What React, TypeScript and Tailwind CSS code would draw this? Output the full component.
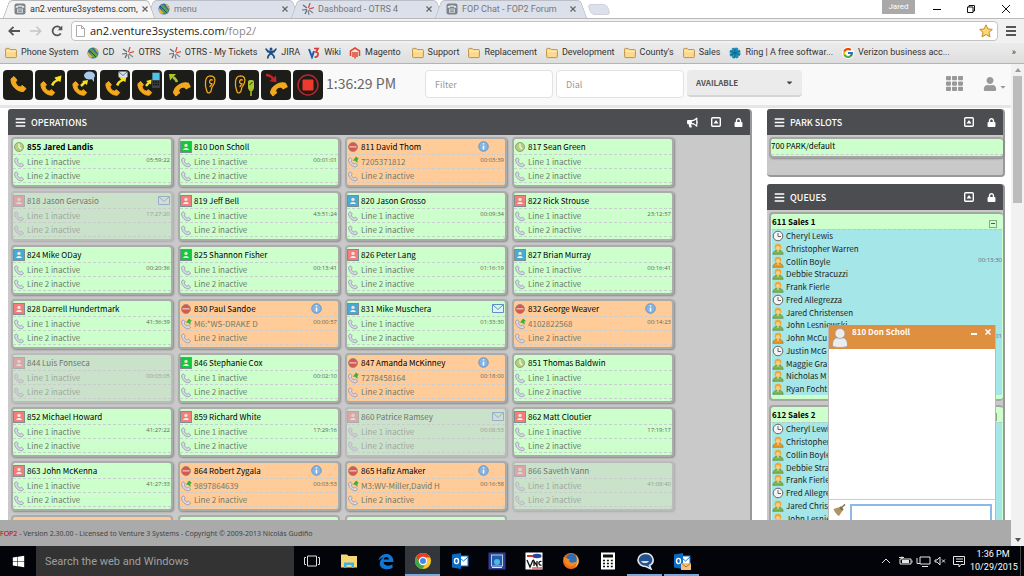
/**
 * @file App.tsx
 * @description FOP2 operator panel inside a Chrome window on a Windows 10 desktop
 *
 * Sections:
 * - Browser chrome (tabs, address bar, bookmarks)
 * - Operator panel (action toolbar, extensions, park slots, queues, chat)
 * - Windows taskbar
 */

import { memo, ReactNode } from "react";
import { FaBars, FaBullhorn, FaCaretDown, FaLock, FaTh, FaUser, FaWindows } from "react-icons/fa";
import { FcGoogle } from "react-icons/fc";

const HANDSET = "M1 3 4 .5 7 4 5.5 6.2C6 8.5 8 10.7 10.2 11L12.3 9.5 16 12.5 13.5 15.5C7 16 .5 9.5 1 3Z";

type Status = "ready" | "busy" | "green" | "red" | "blue";

interface Extension {
  name: string;
  status: Status;
  time?: string;
  call?: string;
  mail?: boolean;
  away?: boolean;
  own?: boolean;
}

const EXTENSIONS: Extension[] = [
  { name: "855 Jared Landis", status: "ready", time: "05:59:22", own: true },
  { name: "810 Don Scholl", status: "green", time: "00:01:01" },
  { name: "811 David Thom", status: "busy", time: "00:03:39", call: "7205371812" },
  { name: "817 Sean Green", status: "ready" },
  { name: "818 Jason Gervasio", status: "red", time: "17:27:20", mail: true, away: true },
  { name: "819 Jeff Bell", status: "red", time: "43:51:24" },
  { name: "820 Jason Grosso", status: "blue", time: "00:09:34" },
  { name: "822 Rick Strouse", status: "red", time: "23:12:57" },
  { name: "824 Mike ODay", status: "blue", time: "00:20:36" },
  { name: "825 Shannon Fisher", status: "green", time: "00:13:41" },
  { name: "826 Peter Lang", status: "red", time: "01:16:19" },
  { name: "827 Brian Murray", status: "blue", time: "00:16:41" },
  { name: "828 Darrell Hundertmark", status: "red", time: "41:36:39" },
  { name: "830 Paul Sandoe", status: "busy", time: "00:00:57", call: "M6:*WS-DRAKE D" },
  { name: "831 Mike Muschera", status: "blue", time: "01:33:30", mail: true },
  { name: "832 George Weaver", status: "busy", time: "00:14:23", call: "4102822568" },
  { name: "844 Luis Fonseca", status: "red", time: "00:03:05", away: true },
  { name: "846 Stephanie Cox", status: "green", time: "00:02:10" },
  { name: "847 Amanda McKinney", status: "busy", time: "00:18:00", call: "7278458164" },
  { name: "851 Thomas Baldwin", status: "ready" },
  { name: "852 Michael Howard", status: "red", time: "41:27:22" },
  { name: "859 Richard White", status: "red", time: "17:29:16" },
  { name: "860 Patrice Ramsey", status: "red", time: "00:08:53", mail: true, away: true },
  { name: "862 Matt Cloutier", status: "red", time: "17:19:17" },
  { name: "863 John McKenna", status: "red", time: "41:27:33" },
  { name: "864 Robert Zygala", status: "busy", time: "00:03:53", call: "9897864639" },
  { name: "865 Hafiz Amaker", status: "busy", time: "00:16:58", call: "M3:WV-Miller,David H" },
  { name: "866 Saveth Vann", status: "red", time: "41:08:40", away: true },
];

type AgentState = "clock" | "free" | "busy";

interface Agent {
  name: string;
  state: AgentState;
  time?: string;
}

const SALES_1: Agent[] = [
  { name: "Cheryl Lewis", state: "clock" },
  { name: "Christopher Warren", state: "free" },
  { name: "Collin Boyle", state: "busy", time: "00:13:30" },
  { name: "Debbie Stracuzzi", state: "free" },
  { name: "Frank Fierle", state: "free" },
  { name: "Fred Allegrezza", state: "clock" },
  { name: "Jared Christensen", state: "free" },
  { name: "John Lesniewski", state: "free" },
  { name: "John McCu", state: "busy", time: "01" },
  { name: "Justin McG", state: "clock" },
  { name: "Maggie Gra", state: "free" },
  { name: "Nicholas M", state: "free" },
  { name: "Ryan Focht", state: "free" },
];

const SALES_2: Agent[] = [
  { name: "Cheryl Lewis", state: "clock" },
  { name: "Christopher", state: "busy" },
  { name: "Collin Boyle", state: "free" },
  { name: "Debbie Stra", state: "free" },
  { name: "Frank Fierle", state: "free" },
  { name: "Fred Allegre", state: "clock" },
  { name: "Jared Chris", state: "free" },
  { name: "John Lesnie", state: "free" },
];

/* ---------- small icons ---------- */

const Globe = () => (
  <svg width="12" height="12" viewBox="0 0 12 12" className="shrink-0">
    <circle cx="6" cy="6" r="5.5" fill="#2f6ea5" />
    <path d="M2 2.5C4 .5 6 2 7 4L11 8C10 11 7 11.5 6 10L4 7Z" fill="#5fa04a" />
    <path d="M1 5 6 10C5 11.5 2 11 1 8ZM7 1C10 1 11.5 4 11 6.5Z" fill="#e0b43a" />
    <path d="M2 3 9 10" stroke="#1e4a74" />
  </svg>
);

const Otrs = () => (
  <svg width="12" height="12" viewBox="0 0 12 12" className="shrink-0" strokeWidth="1.2">
    <path d="M5 5 1 2M5 6.5 0 7M5 7 3 11" stroke="#5d6670" />
    <path d="M6.5 5 8 0M7 6 12 4.5" stroke="#d8493d" />
    <path d="M7 7 11 10M6 7.5 7 12" stroke="#7c868f" />
  </svg>
);

const FopPhone = () => (
  <svg width="12" height="12" viewBox="0 0 12 12" className="shrink-0">
    <rect x=".5" y=".5" width="11" height="11" rx="2" fill="#7b8289" />
    <path d="M1.5 4.5C1.5 1.5 10.5 1.5 10.5 4.5L8.5 5 8 3.8H4L3.5 5Z" fill="#e8eaec" />
    <rect x="3" y="5.5" width="6" height="4.5" rx="1" fill="#d0d4d8" />
    <path d="M4 7H8M4 8.7H8" stroke="#70767c" strokeWidth=".8" />
  </svg>
);

const FolderIcon = () => (
  <svg width="12" height="12" viewBox="0 0 12 12" className="shrink-0">
    <path d="M.6 2.2Q.6 1.4 1.4 1.4H4.2L5.3 2.6H10.6Q11.4 2.6 11.4 3.4V9.8Q11.4 10.6 10.6 10.6H1.4Q.6 10.6 .6 9.8Z" fill="#fbd98e" stroke="#b98a3a" strokeWidth=".9" />
    <path d="M1.2 4.2H10.8" stroke="#fff1c9" />
  </svg>
);

const Jira = () => (
  <svg width="12" height="12" viewBox="0 0 12 12" className="shrink-0" stroke="#1c4f86" fill="none" strokeWidth="1.8">
    <circle cx="6" cy="2" r="1.5" fill="#1c4f86" stroke="none" />
    <path d="M1 1.5C1 5 11 7 9 11.5M11 1.5C11 5 1 7 3 11.5M2 4.5 10 4.5" />
  </svg>
);

const WikiMark = () => (
  <svg width="12" height="12" viewBox="0 0 12 12" className="shrink-0" fill="none" strokeWidth="2">
    <path d="M1 2 4 10 6 4" stroke="#1f5fae" />
    <path d="M6 1.5H10L8 5C11 5 11 10.5 6.5 10" stroke="#d63b2f" strokeWidth="1.7" />
  </svg>
);

const MagentoMark = () => (
  <svg width="12" height="12" viewBox="0 0 12 12" className="shrink-0" fill="none" stroke="#e0452c" strokeWidth="1.5">
    <path d="M1.5 9V3.8L6 1 10.5 3.8V9M4 10V5M8 10V5M6 5V11.5" />
  </svg>
);

const RingMark = () => (
  <svg width="12" height="12" viewBox="0 0 12 12" className="shrink-0">
    <circle cx="6" cy="6" r="4.6" fill="#1f8fb8" stroke="#1f8fb8" strokeWidth="2" strokeDasharray="2.5 1.1" />
    <path d="M6 1V11M1.5 4 10.5 8M10.5 4 1.5 8" stroke="#11617f" strokeWidth=".8" />
  </svg>
);

const CloseMark = () => (
  <svg width="6" height="6" viewBox="0 0 6 6" className="shrink-0" stroke="#666">
    <path d="M.5 .5 5.5 5.5M5.5 .5 .5 5.5" strokeWidth="1.2" />
  </svg>
);

/* ---------- browser ---------- */

const Tab = ({ icon, title, active }: { icon: ReactNode; title: string; active?: boolean }) => {
  const edge = active ? "bg-[#f4f4f4] border-[#b5b5b5]" : "bg-[#dce0ea] border-[#bbbec6]";
  return (
    <div className={`relative -ml-[10px] flex h-full w-[154px] items-center gap-1 pl-3 pr-[13px] ${active ? "z-10" : ""}`}>
      <span className={`absolute inset-y-0 left-1 w-1/2 -skew-x-[20deg] rounded-tl border-l border-t ${edge}`} />
      <span className={`absolute inset-y-0 right-1 w-1/2 skew-x-[20deg] rounded-tr border-r border-t ${edge}`} />
      <span className="relative">{icon}</span>
      <span className={`relative flex-1 whitespace-nowrap text-[9px] leading-3 ${active ? "text-[#333]" : "text-[#777]"}`}>
        {title}
      </span>
      <button aria-label="Close tab" className="relative -mr-px"><CloseMark /></button>
    </div>
  );
};

const Bookmark = ({ icon, label }: { icon: ReactNode; label: string }) => (
  <a href="#" className="flex items-center gap-1 whitespace-nowrap">
    {icon}
    {label}
  </a>
);

const BrowserChrome = () => (
  <header className="shrink-0 font-['Roboto','Open_Sans',sans-serif]">
    <div className="flex h-[19px] items-stretch border-b border-[#b9b9b9] bg-white">
      <div className="flex pl-3">
        <Tab active icon={<FopPhone />} title="an2.venture3systems.com," />
        <Tab icon={<Globe />} title="menu" />
        <Tab icon={<Otrs />} title="Dashboard - OTRS 4" />
        <Tab icon={<FopPhone />} title="FOP Chat - FOP2 Forum" />
        <button aria-label="New tab" className="mt-1 ml-px h-[11px] w-5 skew-x-[20deg] rounded-sm border border-[#cfd2da] bg-[#dce0ea]" />
      </div>
      <div className="ml-auto flex items-start">
        <span className="h-[14px] w-[33px] bg-[#a9a9a9] text-center text-[8px] leading-[14px] text-white">Jared</span>
        <button aria-label="Minimize" className="ml-2 flex h-[18px] w-[28px] items-center justify-center">
          <span className="h-px w-2 bg-black" />
        </button>
        <button aria-label="Restore" className="ml-1 flex h-[18px] w-[32px] items-center justify-center">
          <svg width="8" height="8" viewBox="0 0 8 8" fill="none" stroke="#111">
            <path d="M.5 2H6V7.5H.5ZM2 2V.5H7.5V6H6" />
          </svg>
        </button>
        <button aria-label="Close" className="flex h-[18px] w-[37px] items-center justify-center">
          <svg width="8" height="8" viewBox="0 0 8 8" stroke="#111"><path d="M0 0 8 8M8 0 0 8" /></svg>
        </button>
      </div>
    </div>

    <div className="flex h-[24px] items-center bg-[#f1f1f1] pl-2 pr-1">
      <button aria-label="Back" className="w-[22px]">
        <svg width="12" height="10" viewBox="0 0 12 10" fill="none" stroke="#555" strokeWidth="1.8"><path d="M12 5H1M5.5 .8 1.3 5 5.5 9.2" /></svg>
      </button>
      <button aria-label="Forward" className="w-[21px]">
        <svg width="12" height="10" viewBox="0 0 12 10" fill="none" stroke="#c4c4c4" strokeWidth="1.5"><path d="M0 5H11M6.5 .8 10.7 5 6.5 9.2" /></svg>
      </button>
      <button aria-label="Reload" className="w-[20px]">
        <svg width="12" height="12" viewBox="0 0 12 12" fill="none" stroke="#555" strokeWidth="1.8">
          <path d="M9.8 8.5A4.5 4.5 0 1 1 9.5 3" />
          <path d="M11.3 .6V5.2H6.7Z" fill="#555" stroke="none" />
        </svg>
      </button>
      <div className="flex h-5 flex-1 items-center gap-[5px] rounded-sm border border-[#c3c3c3] bg-white px-1">
        <svg width="9" height="12" viewBox="0 0 9 12" fill="none" stroke="#aaa"><path d="M.5 .5H5.5L8.5 3.5V11.5H.5ZM5.5 .5V3.5H8.5" /></svg>
        <span className="flex-1 font-['Open_Sans',sans-serif] text-[11px] leading-4 text-[#222]">
          an2.venture3systems.com<span className="text-[#888]">/fop2/</span>
        </span>
        <svg width="14" height="14" viewBox="0 0 14 14" fill="#fbd874" stroke="#c08a2c">
          <path d="M7 .8 8.9 5 13.3 5.4 10 8.4 11 12.9 7 10.5 3 12.9 4 8.4 .7 5.4 5.1 5Z" />
        </svg>
      </div>
      <button aria-label="Menu" className="ml-2 mr-1 flex w-[10px] flex-col gap-[2px]">
        <span className="h-[2px] bg-[#555]" /><span className="h-[2px] bg-[#555]" /><span className="h-[2px] bg-[#555]" />
      </button>
    </div>

    <nav className="flex h-[21px] items-center gap-2 border-b border-[#b4b4b4] bg-gradient-to-b from-[#ececec] to-[#dedede] pl-[5px] pr-1 text-[9px] text-[#333]">
      <Bookmark icon={<FolderIcon />} label="Phone System" />
      <Bookmark icon={<Globe />} label="CD" />
      <Bookmark icon={<Otrs />} label="OTRS" />
      <Bookmark icon={<Otrs />} label="OTRS - My Tickets" />
      <Bookmark icon={<Jira />} label="JIRA" />
      <Bookmark icon={<WikiMark />} label="Wiki" />
      <Bookmark icon={<MagentoMark />} label="Magento" />
      <div className="flex items-center gap-[9px] pl-[3px]">
        <Bookmark icon={<FolderIcon />} label="Support" />
        <Bookmark icon={<FolderIcon />} label="Replacement" />
        <Bookmark icon={<FolderIcon />} label="Development" />
        <Bookmark icon={<FolderIcon />} label="County's" />
        <Bookmark icon={<FolderIcon />} label="Sales" />
        <Bookmark icon={<RingMark />} label="Ring | A free softwar..." />
        <Bookmark icon={<FcGoogle size={12} className="shrink-0 rounded-full bg-white" />} label="Verizon business acc..." />
      </div>
      <button aria-label="More bookmarks" className="ml-auto pr-1">»</button>
    </nav>
  </header>
);

/* ---------- action toolbar ---------- */

const Handset = ({ small }: { small?: boolean }) => (
  <path d={HANDSET} transform={small ? "translate(5 11) scale(.92)" : "translate(7 6)"} fill="#f5a81c" stroke="#f5a81c" strokeLinejoin="round" />
);

const HungHandset = () => (
  <path d={HANDSET} transform="translate(18 19) rotate(103) translate(-8 -8)" fill="#f5a81c" stroke="#f5a81c" strokeLinejoin="round" />
);

const YellowArrow = () => (
  <path d="M16 15C17 12 19 10.5 21 9.8L19.5 7.5 26.5 5.5 25.5 12 23.5 11C21 11.5 19 13.5 18.5 16Z" fill="#f8e11f" />
);

const EarShape = ({ x }: { x: number }) => (
  <g transform={`translate(${x} 5)`} fill="none" stroke="#f5a81c" strokeWidth="1.3" strokeLinecap="round">
    <path d="M1.8 16C-.5 10 -.5 1 5.5 .8 10 .8 10.5 5 9.5 7.5 9 10.5 6.5 11 6.5 14 6.3 18 2.5 19.5 1.8 16" />
    <path d="M7.5 5C4.5 4 4.2 7 5 8L7 9 5 11.5" />
  </g>
);

const ACTIONS: { label: string; art: ReactNode }[] = [
  { label: "Dial", art: <Handset /> },
  { label: "Transfer", art: <><Handset small /><YellowArrow /></> },
  {
    label: "Transfer and speak",
    art: <>
      <Handset small />
      <path d="M14 16 18 12" stroke="#f8e11f" strokeWidth="2.5" />
      <path d="M15 11 21 10 20 15Z" fill="#f8e11f" />
      <ellipse cx="22.5" cy="5.5" rx="5.5" ry="4" fill="#a9c8ea" />
      <path d="M24 8 27 12 27 7Z" fill="#a9c8ea" />
    </>,
  },
  {
    label: "Transfer to voicemail",
    art: <>
      <Handset small /><YellowArrow />
      <rect x="18.5" y="1.5" width="9" height="6" rx="1" fill="#d8e0ea" />
      <path d="M19 2 23 5.5 27 2" fill="none" stroke="#6f7c8c" />
    </>,
  },
  {
    label: "Transfer to mobile",
    art: <>
      <Handset small />
      <path d="M14 16 17 12.5" stroke="#f8e11f" strokeWidth="2.5" />
      <path d="M14 11 19.5 9.5 19 14.5Z" fill="#f8e11f" />
      <rect x="20" y="2" width="8" height="16" rx="1" fill="#3b4248" />
      <rect x="20.5" y="3" width="7" height="7" fill="#4cc3e6" />
      <path d="M21 12H27M21 14.5H27" stroke="#111" strokeDasharray="1.5 .8" strokeWidth="1.5" />
    </>,
  },
  {
    label: "Pickup",
    art: <>
      <HungHandset />
      <path d="M13 12C12 9.5 11 8 9 7.5" fill="none" stroke="#a6c62a" strokeWidth="2.5" />
      <path d="M5 4 12 4 6 10.5Z" fill="#a6c62a" />
    </>,
  },
  { label: "Listen", art: <EarShape x={9} /> },
  {
    label: "Whisper",
    art: <>
      <EarShape x={6} />
      <rect x="19" y="10" width="6" height="10" rx="2" fill="#a6c62a" />
      <path d="M22 19V26M20 20H24" stroke="#a6c62a" strokeWidth="1.5" />
      <path d="M20.5 15 23.5 12" stroke="#1c1c18" />
    </>,
  },
  {
    label: "Hangup",
    art: <>
      <HungHandset />
      <path d="M5 5C8 5 10 6 12 8.5" fill="none" stroke="#c3222c" strokeWidth="2.5" />
      <path d="M15 5.5 15.5 12.5 8.5 11Z" fill="#c3222c" />
    </>,
  },
  {
    label: "Record",
    art: <>
      <circle cx="15" cy="15" r="10" fill="none" stroke="#b8262a" strokeWidth="1.5" />
      <rect x="9.5" y="9.5" width="11" height="11" rx="1" fill="#ee3a2c" />
    </>,
  },
];

const ActionBar = () => (
  <div className="flex h-[44px] shrink-0 items-start border-b-[3px] border-[#e6e6e6] bg-[#f9f9f9] pt-[6px] pl-[3px]">
    <div className="flex w-[320px] justify-between">
      {ACTIONS.map(a => (
        <button key={a.label} aria-label={a.label} className="h-[30px] w-[30px] rounded-sm bg-[#1c1c18]">
          <svg width="30" height="30" viewBox="0 0 30 30">{a.art}</svg>
        </button>
      ))}
    </div>
    <span className="w-[102px] pl-[3px] text-[14px] leading-[26px] text-[#666]">1:36:29 PM</span>
    <input aria-label="Filter" placeholder="Filter" className="h-[28px] w-[128px] rounded-sm border border-[#e2e2e2] bg-white px-[9px] text-[9px] placeholder:text-[#999]" />
    <input aria-label="Dial" placeholder="Dial" className="ml-[3px] h-[28px] w-[128px] rounded-sm border border-[#e2e2e2] bg-white px-[9px] text-[9px] placeholder:text-[#999]" />
    <div className="relative ml-[3px]">
      <select aria-label="Presence" className="block h-[27px] w-[115px] appearance-none rounded-sm border-b-2 border-[#d5d5d5] bg-[#ebebeb] px-[9px] text-[8px] font-bold text-[#555]">
        <option>AVAILABLE</option>
      </select>
      <FaCaretDown size={9} className="pointer-events-none absolute right-2 top-2 text-[#444]" />
    </div>
    <div className="ml-auto flex items-center gap-5 pr-1 pt-[5px] text-[#999]">
      <button aria-label="Applications"><FaTh size={17} /></button>
      <button aria-label="User" className="flex items-end gap-[2px]"><FaUser size={14} /><FaCaretDown size={8} /></button>
    </div>
  </div>
);

/* ---------- panels ---------- */

/**
 * Panel
 *
 * Dark titled box with the collapse and lock buttons.
 */
const Panel = ({ title, announce, className, children }: { title: string; announce?: boolean; className?: string; children: ReactNode }) => (
  <section className={`rounded-[4px] border-r-2 border-b-2 border-[#999] bg-[#c9c9c9] ${className ?? ""}`}>
    <div className="flex h-[26px] items-center rounded-t-[3px] bg-[#4b4d51] px-[7px] text-white">
      <FaBars size={11} />
      <h2 className="ml-[5px] flex-1 pt-[2px] text-[9px] font-medium leading-[14px]">{title}</h2>
      <div className="flex items-center gap-[13px]">
        {announce && <button aria-label="Announce"><FaBullhorn size={11} /></button>}
        <button aria-label="Collapse">
          <svg width="10" height="10" viewBox="0 0 10 10" fill="none" stroke="#fff" strokeWidth="1.4">
            <rect x=".7" y=".7" width="8.6" height="8.6" rx="1" />
            <path d="M2.5 6.5 5 3 7.5 6.5Z" fill="#fff" stroke="none" />
          </svg>
        </button>
        <button aria-label="Lock"><FaLock size={9} /></button>
      </div>
    </div>
    {children}
  </section>
);

const AVATAR_BG = { green: "#12c83c", red: "#f47c7c", blue: "#47a9d4" };

const StatusIcon = ({ status }: { status: Status }) => {
  if (status === "ready" || status === "busy") {
    const color = status === "ready" ? "#b4cf7e" : "#d9574f";
    return (
      <svg width="12" height="12" viewBox="0 0 12 12" className="shrink-0">
        <circle cx="6" cy="6" r="4.5" fill={color} stroke="#8f8a72" strokeWidth=".8" />
        {status === "busy"
          ? <path d="M2.5 5.8H9.5" stroke="#f0b4ae" strokeWidth="1.5" />
          : <path d="M6 2.5V6L8 8" stroke="#f5fbe4" fill="none" strokeWidth="1.2" />}
      </svg>
    );
  }
  return (
    <svg width="12" height="12" viewBox="0 0 12 12" className="shrink-0">
      <rect x=".5" y=".5" width="11" height="11" fill={AVATAR_BG[status]} stroke="#7d8d8d" />
      <circle cx="6" cy="4.4" r="1.7" fill="#eee6d4" />
      <path d="M3.2 9C3.2 6.2 8.8 6.2 8.8 9Z" fill="#f3f3f0" />
    </svg>
  );
};

const LineIcon = ({ active }: { active?: boolean }) => (
  <svg width="12" height="12" viewBox="0 0 12 12" className="shrink-0">
    <path d={HANDSET} transform="translate(1 1.5) scale(.6)" fill="#dcdcea" stroke="#80809a" strokeWidth="1.1" />
    {active && <path d="M6 4.5 9 .5 12 3 10.5 3.5V7L8.5 5Z" fill="#3fae3a" />}
  </svg>
);

const ExtensionCard = memo(({ ext }: { ext: Extension }) => (
  <article
    className={`h-[50px] w-[162px] rounded-[4px] border-2 border-[#a9aca9] shadow-[1px_1px_2px_#888] ${ext.call ? "bg-[#ffcc99]" : "bg-[#ccffcc]"} ${ext.away ? "opacity-45" : ""}`}
  >
    <div className="flex h-4 items-center gap-[2px] border-b border-dashed border-[#c9cfd0] text-[8px] text-black">
      <StatusIcon status={ext.status} />
      <h3 className={`flex-1 whitespace-nowrap ${ext.own ? "font-bold" : ""}`}>{ext.name}</h3>
      {ext.mail && (
        <svg width="12" height="9" viewBox="0 0 12 9" className="mr-px" fill="#e4f0fb" stroke="#5f8fc6">
          <path d="M.5 .5H11.5V8.5H.5ZM.5 .5 6 5.5 11.5 .5" />
        </svg>
      )}
      {ext.call && (
        <svg width="11" height="11" viewBox="0 0 11 11" className="mr-4">
          <circle cx="5.5" cy="5.5" r="4.8" fill="#84b4e4" stroke="#5b8cc0" strokeWidth=".8" />
          <path d="M5.5 2.3V3.5M5.5 4.7V8.5" stroke="#fff" strokeWidth="1.5" />
        </svg>
      )}
    </div>
    {[ext.call ?? "Line 1 inactive", "Line 2 inactive"].map((line, i) => (
      <div key={i} className="flex h-[14px] items-center gap-[2px] border-b border-dashed border-[#c9cfd0] pr-px text-[8px] text-[#6f7a6f]">
        <LineIcon active={!!ext.call && i === 0} />
        <span className="flex-1 whitespace-nowrap">{line}</span>
        {i === 0 && ext.time && (
          <time className="self-start font-['Open_Sans',sans-serif] text-[6px] leading-[10px] text-[#5f685f]">{ext.time}</time>
        )}
      </div>
    ))}
  </article>
));

ExtensionCard.displayName = "ExtensionCard";

const AgentIcon = ({ state }: { state: AgentState }) => {
  if (state === "clock") {
    return (
      <svg width="12" height="12" viewBox="0 0 12 12" className="shrink-0" fill="#f4f4f4" stroke="#666">
        <circle cx="6" cy="6" r="4.8" />
        <path d="M6 3V6.5H9" fill="none" />
      </svg>
    );
  }
  const body = state === "free" ? "#7cb84a" : "#f7941e";
  return (
    <svg width="12" height="12" viewBox="0 0 12 12" className="shrink-0">
      <path d="M.8 11.3C1 8 4 7 6 7S11 8 11.2 11.3Z" fill={body} stroke="#5e7a3c" strokeWidth=".6" />
      <circle cx="6" cy="4" r="3.3" fill="#f0a732" />
      <circle cx="6" cy="5" r="2" fill="#f8d08c" />
      <path d="M5 7.5 6 9 7 7.5Z" fill="#fff" />
    </svg>
  );
};

const QueueCard = ({ title, agents, className }: { title: string; agents: Agent[]; className: string }) => (
  <article className="rounded-[4px] border-2 border-r-0 border-[#a3a8a3] bg-[#ccffcc] px-px pb-1">
    <div className="flex h-[15px] items-center justify-between pr-[5px]">
      <h3 className="text-[8px] font-bold text-black">{title}</h3>
      <button aria-label="Collapse queue" className="mt-1 flex h-2 w-2 items-center justify-center border border-[#8aa88a]">
        <span className="h-px w-1 bg-[#555]" />
      </button>
    </div>
    <ul className={`flex flex-col justify-between border-t border-dashed border-[#b9c9b9] bg-[#a5e6e8] ${className}`}>
      {agents.map(agent => (
        <li key={agent.name} className="flex h-3 items-center gap-[2px] text-[8px] leading-3 text-[#222]">
          <AgentIcon state={agent.state} />
          <span className="flex-1 whitespace-nowrap">{agent.name}</span>
          {agent.time && <time className="self-start font-['Open_Sans',sans-serif] text-[6px] leading-[8px] text-[#667]">{agent.time}</time>}
        </li>
      ))}
    </ul>
  </article>
);

const ChatWindow = () => (
  <aside className="absolute bottom-0 right-[15px] flex h-[195px] w-[168px] flex-col border-x border-[#bbb] bg-white">
    <div className="flex h-[24px] items-start bg-[#de9040] pl-[2px] text-white">
      <svg width="18" height="22" viewBox="0 0 18 22" className="mt-px" fill="#ececec" stroke="#9a9a9a" strokeWidth=".8">
        <path d="M1.5 20C1.5 13 4 11.5 9 11.5S16.5 13 16.5 20C14 22 4 22 1.5 20Z" />
        <circle cx="9" cy="7.5" r="5" />
      </svg>
      <h3 className="ml-[3px] flex-1 text-[8px] font-bold leading-[14px]">810 Don Scholl</h3>
      <button aria-label="Minimize chat" className="mr-2 mt-2 h-[2px] w-[6px] bg-white" />
      <button aria-label="Close chat" className="mr-1 mt-1">
        <svg width="6" height="6" viewBox="0 0 6 6" stroke="#fff" strokeWidth="1.5"><path d="M.5 .5 5.5 5.5M5.5 .5 .5 5.5" /></svg>
      </button>
    </div>
    <div className="flex-1" />
    <div className="flex h-[21px] items-start border-t border-[#ccc] pl-1 pt-1">
      <svg width="13" height="13" viewBox="0 0 13 13" className="shrink-0">
        <path d="M8 4 12 .5" stroke="#8a6a3c" strokeWidth="1.5" />
        <path d="M.5 5 7 3 10 6 6 12C4 11 1.5 8 .5 5Z" fill="#b39163" />
        <path d="M7 3 10 6" stroke="#5d7a4c" strokeWidth="2" />
      </svg>
      <input aria-label="Message" className="ml-1 h-4 w-[142px] border-2 border-b-0 border-[#8cb8ea] bg-white px-px text-[9px] outline-none" autoFocus />
    </div>
  </aside>
);

const OperatorPanel = () => (
  <main className="flex min-h-0 flex-1 bg-white font-['Noto_Sans_CJK_SC','Open_Sans',sans-serif]">
    <div className="flex min-w-0 flex-1 flex-col">
      <ActionBar />
      <div className="relative flex min-h-0 flex-1 items-start gap-[15px] overflow-hidden pl-2 pr-[6px] pt-px">
        <Panel title="OPERATIONS" announce className="flex-1">
          <div className="flex flex-wrap gap-x-[5px] gap-y-1 py-[2px] pl-[3px]">
            {EXTENSIONS.map(ext => <ExtensionCard key={ext.name} ext={ext} />)}
            {/* Last row runs under the footer */}
            <div className="h-[50px] w-[162px] rounded-[4px] border-2 border-[#a9aca9] bg-[#ffcc99]" />
            <div className="h-[50px] w-[162px] rounded-[4px] border-2 border-[#a9aca9] bg-[#ccffcc]" />
            <div className="h-[50px] w-[162px] rounded-[4px] border-2 border-[#a9aca9] bg-[#ccffcc]" />
          </div>
        </Panel>
        <div className="flex w-[238px] flex-col gap-[7px]">
          <Panel title="PARK SLOTS">
            <div className="h-[40px] pl-[2px] pt-[2px]">
              <div className="h-[21px] rounded-[4px] border-2 border-r-0 border-[#a3a8a3] bg-[#ccffcc] shadow-[1px_1px_2px_#888]">
                <div className="h-4 border-b border-dashed border-[#c9cfd0] text-[8px] leading-[14px] text-black">700 PARK/default</div>
              </div>
            </div>
          </Panel>
          <Panel title="QUEUES">
            <div className="flex flex-col gap-1 pl-[2px] pt-[2px]">
              <QueueCard title="611 Sales 1" agents={SALES_1} className="h-[166px]" />
              <QueueCard title="612 Sales 2" agents={SALES_2} className="h-[103px]" />
            </div>
          </Panel>
        </div>
        <ChatWindow />
      </div>
      <footer className="h-[26px] shrink-0 bg-[#aaa] font-['Noto_Sans',sans-serif] text-[7px] leading-[28px] text-[#444]">
        <a href="#" className="text-[#c00000]">FOP2</a> - Version 2.30.00 - Licensed to Venture 3 Systems - Copyright © 2009-2013 Nicolás Gudiño
      </footer>
    </div>
    {/* Page scrollbar */}
    <div className="flex w-[13px] shrink-0 flex-col items-center justify-between bg-[#f1f1f1] py-1">
      <div className="flex flex-col items-center gap-1">
        <svg width="6" height="4" viewBox="0 0 6 4" fill="#999"><path d="M0 4 3 0 6 4Z" /></svg>
        <div className="h-[127px] w-[9px] bg-[#bcbcbc]" />
      </div>
      <svg width="6" height="4" viewBox="0 0 6 4" fill="#555"><path d="M0 0 3 4 6 0Z" /></svg>
    </div>
  </main>
);

/* ---------- taskbar ---------- */

const OutlookArt = () => (
  <>
    <rect x="8" y="4" width="9" height="10" fill="#fff" stroke="#1473c8" />
    <path d="M9 6 12.5 9 17 5" fill="none" stroke="#1473c8" />
    <path d="M1 2.5 10 1V17L1 15.5Z" fill="#0a6cc4" />
    <ellipse cx="5.5" cy="9" rx="2" ry="2.6" fill="none" stroke="#fff" strokeWidth="1.4" />
  </>
);

const APPS: { label: string; state?: "active" | "open"; art: ReactNode }[] = [
  { label: "Task View", art: <path d="M4.5 4H13.5V14H4.5ZM3 5.5H1.5V12.5H3M15 5.5H16.5V12.5H15" fill="none" stroke="#ddd" /> },
  {
    label: "File Explorer",
    art: <>
      <path d="M1 2.5H7L8.5 4H17V15.5H1Z" fill="#f7d774" />
      <path d="M4 16V10.5H14V16H11.5V13H6.5V16Z" fill="#41b0e4" />
    </>,
  },
  { label: "Edge", art: <path d="M1.5 8.5C3 0 16.5-1 16.5 10H6.5C7 14 12 14.5 15.5 12.5V16C8 19 1.5 16 3 10 3.5 7.5 6 5.5 7.5 5.5 4.5 5.5 2.5 7 1.5 8.5ZM6.7 7.5H12C12 4 7 4 6.7 7.5Z" fill="#0f78d6" fillRule="evenodd" /> },
  {
    label: "Chrome", state: "active",
    art: <>
      <circle cx="9" cy="9" r="8" fill="#fbc926" />
      <path d="M2 5A8 8 0 0 1 16.2 5.5H9L5.5 10Z" fill="#e2402f" />
      <path d="M2 5A8 8 0 0 0 8.5 17L12 11 6 11Z" fill="#3fa64a" />
      <circle cx="9" cy="9" r="3.6" fill="#4a86e8" stroke="#fff" strokeWidth="1.2" />
    </>,
  },
  { label: "Outlook", art: <OutlookArt /> },
  {
    label: "Remote Tool",
    art: <>
      <rect x=".5" y=".5" width="17" height="17" fill="#2e3f94" />
      <rect x="3.5" y="3" width="11" height="11" fill="#1f5fa8" stroke="#b9cbe8" />
      <circle cx="9" cy="10" r="3" fill="#4fb6e6" /><path d="M4 15.5H14" stroke="#dfe8f5" />
    </>,
  },
  {
    label: "VNC",
    art: <>
      <rect x=".5" y=".5" width="17" height="17" fill="#fff" />
      <ellipse cx="12" cy="4" rx="4.5" ry="2.2" fill="#24479c" /><path d="M2 4H8" stroke="#c33" strokeWidth="2" />
      <path d="M2 8 5 15 8 8M9 14V9L12 14V9M16.5 9.5C13 8.5 13 14 16.5 13" fill="none" stroke="#111" strokeWidth="1.3" />
      <path d="M7 16H17" stroke="#c33" strokeWidth="1.2" />
    </>,
  },
  {
    label: "Firefox",
    art: <>
      <circle cx="9" cy="9" r="8" fill="#ee6b1f" />
      <circle cx="9.5" cy="7.5" r="5.8" fill="#2c6fb8" />
      <path d="M1.5 5C4 5 5 7 8 7.5 6 9 8 12.5 14.5 9.5 14 16 3 16.5 1.5 5Z" fill="#f28a20" />
      <path d="M14 3.5C18 7 17 13 13 15.5 15 12 15.5 7 14 3.5Z" fill="#fbc02d" />
    </>,
  },
  {
    label: "Calculator",
    art: <>
      <rect x="2" y=".5" width="14" height="17" fill="#fff" />
      <rect x="4" y="2.5" width="10" height="3" fill="#111" />
      <path d="M4 8.5H14M4 11.5H14M4 14.5H14" stroke="#111" strokeWidth="1.7" strokeDasharray="2 1.9" />
    </>,
  },
  {
    label: "Messenger", state: "open",
    art: <>
      <path d="M9 1.5A7.5 6.5 0 1 0 10 14.5L15 17 13.5 13.5A7.5 6.5 0 0 0 9 1.5Z" fill="#24508c" stroke="#dfe6ee" strokeWidth="1.6" />
      <path d="M5 9C6.5 12 11.5 12 13 9" fill="#cfdcec" />
    </>,
  },
  {
    label: "Outlook Mail", state: "open",
    art: <>
      <OutlookArt />
      <rect x="8" y="11" width="10" height="7" fill="#f6c07a" /><path d="M8 11 13 15 18 11" fill="none" stroke="#b3742c" />
    </>,
  },
];

const Taskbar = () => (
  <nav className="flex h-[30px] shrink-0 items-stretch bg-[#02040a] font-['Roboto','Open_Sans',sans-serif] text-white">
    <button aria-label="Start" className="flex w-[36px] items-center justify-center"><FaWindows size={13} /></button>
    <input aria-label="Search" placeholder="Search the web and Windows" className="w-[258px] bg-[#333] px-[9px] pt-[2px] text-[11px] placeholder:text-[#a0a0a0]" />
    <div className="flex gap-[2px]">
      {APPS.map(app => (
        <button
          key={app.label}
          aria-label={app.label}
          className={`flex w-[35px] items-center justify-center ${app.state ? "border-b-2 border-[#76a9dc] pt-[2px]" : ""} ${app.state === "active" ? "bg-[#33373b]" : ""}`}
        >
          <svg width="18" height="18" viewBox="0 0 18 18">{app.art}</svg>
        </button>
      ))}
    </div>
    <div className="ml-auto flex items-center gap-1">
      <svg width="86" height="14" viewBox="-6 0 86 14" fill="none" stroke="#e6e6e6">
        <path d="M-4 9 0 5 4 9" />
        <path d="M14 5H25V10H14ZM26 6.5V8.5M16 2.5V5M13 3.5H18" />
        <path d="M16 7.5H23" strokeWidth="3" />
        <path d="M34 3H44V10H34ZM36 12.5H42M31 4V9.5M31 9.5H34" />
        <path d="M49 6H51L54 3V11L51 8H49ZM56 5.5 59 8.5M59 5.5 56 8.5" />
        <path d="M67.5 2.5H78.5V10.5H75L73 13V10.5H67.5ZM70 5H77M70 7.5H77" />
      </svg>
      <div className="w-[46px] text-center text-[9px] leading-[13px]">
        <p>1:36 PM</p>
        <p>10/29/2015</p>
      </div>
      <span className="h-full w-[4px] border-l border-[#444]" />
    </div>
  </nav>
);

export default function App() {
  return (
    <div className="flex h-screen flex-col overflow-hidden bg-white">
      <BrowserChrome />
      <OperatorPanel />
      <Taskbar />
    </div>
  );
}
